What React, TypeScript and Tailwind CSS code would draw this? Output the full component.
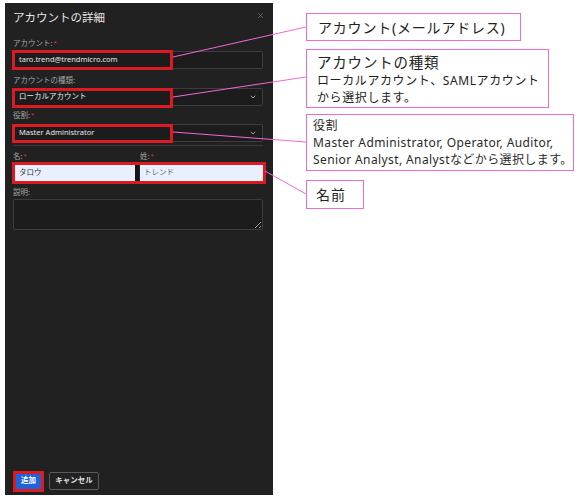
import { ChevronDown, X } from "lucide-react";

const font = "font-['Noto_Sans','Noto_Sans_CJK_JP',sans-serif]";

function Label({ text, required }: { text: string; required?: boolean }) {
  return (
    <div className="flex h-[10px] items-center text-[7.5px] leading-none text-[#a3a3a3]">
      {text}
      {required && <span className="ml-[1px] -mt-[3px] text-[6px] text-[#e0353b]">*</span>}
    </div>
  );
}

function Field({
  children,
  select,
  className = "",
}: {
  children: React.ReactNode;
  select?: boolean;
  className?: string;
}) {
  return (
    <div
      className={`flex h-[18px] items-center justify-between rounded-[2px] border border-[#3d3d3d] bg-[#1c1c1c] px-[5px] text-[7.5px] text-[#e8e8e8] ${className}`}
    >
      <span>{children}</span>
      {select && <ChevronDown size={8} strokeWidth={2.5} className="text-[#bdbdbd]" />}
    </div>
  );
}

function RedBox({ className }: { className: string }) {
  return <div className={`pointer-events-none absolute border-[3px] border-[#dc1a22] ${className}`} />;
}

export default function App() {
  return (
    <div className={`relative h-[499px] w-[579px] bg-white ${font}`}>
      <div className="flex">
        {/* Dialog panel */}
        <div className="ml-[5px] mt-[3px] flex h-[492px] w-[268px] flex-col bg-[#212121] pl-[8px] pr-[10px] pb-[4px]">
          <div className="flex h-[28px] items-center justify-between pt-[2px]">
            <span className="text-[11.5px] text-[#e6e6e6]">アカウントの詳細</span>
            <X size={9} strokeWidth={1.5} className="mr-[-2px] -mt-[6px] text-[#8a8a8a]" />
          </div>

          <div className="mt-[8px]">
            <Label text="アカウント:" required />
          </div>
          <div className="relative mt-[2px]">
            <Field>taro.trend@trendmicro.com</Field>
            <RedBox className="-left-[1px] -top-[1px] h-[20px] w-[161px]" />
          </div>

          <div className="mt-[7px]">
            <Label text="アカウントの種類:" />
          </div>
          <div className="relative mt-[2px]">
            <Field select>ローカルアカウント</Field>
            <RedBox className="-left-[1px] top-0 h-[20px] w-[161px]" />
          </div>

          <div className="mt-[5px]">
            <Label text="役割:" required />
          </div>
          <div className="relative mt-[3px]">
            <Field select>Master Administrator</Field>
            <RedBox className="-left-[1px] top-0 h-[19px] w-[161px]" />
          </div>
          <div className="mt-[3px] h-px bg-[#3a3a3a]" />

          <div className="mt-[6px] flex">
            <div className="w-[127px]">
              <Label text="名:" required />
            </div>
            <Label text="姓:" required />
          </div>
          <div className="relative mt-[2px] flex gap-[4px]">
            <div className="ml-[2px] flex h-[18px] w-[121px] items-center bg-[#e8f0fe] px-[4px] text-[7.5px] text-[#333]">
              タロウ
            </div>
            <div className="flex h-[18px] flex-1 items-center bg-[#e8f0fe] px-[4px] text-[7.5px] text-[#666]">
              トレンド
            </div>
            <RedBox className="-left-[1px] -top-[2px] h-[22px] w-[254px]" />
            <div className="absolute left-[122px] top-[1px] h-[16px] w-[4px] bg-[#151515]" />
          </div>

          <div className="mt-[6px]">
            <Label text="説明:" />
          </div>
          <textarea
            readOnly
            className="mt-[1px] h-[31px] w-full resize-y rounded-[2px] border border-[#3d3d3d] bg-[#1c1c1c] outline-none"
          />

          <div className="mt-auto mb-[1px] flex items-center gap-[7px] pl-[2px]">
            <div className="relative">
              <div className="flex h-[17px] w-[27px] items-center justify-center rounded-[1px] bg-[#1f63d9] text-[7.5px] font-semibold text-white">
                追加
              </div>
              <RedBox className="-left-[2px] -top-[2px] h-[21px] w-[31px]" />
            </div>
            <div className="flex h-[18px] w-[50px] items-center justify-center rounded-[2px] border border-[#5a5a5a] text-[7.5px] font-semibold text-[#e0e0e0]">
              キャンセル
            </div>
          </div>
        </div>

        {/* Annotations */}
        <div className="ml-[33px] mt-[13px] flex flex-col items-start whitespace-nowrap text-[#222]">
          <div className="flex h-[28px] w-[215px] items-center border-[1.5px] border-[#f06ad2] px-[11px] text-[14px] tracking-[0.8px]">
            アカウント(メールアドレス)
          </div>
          <div className="mt-[8px] flex h-[59px] w-[243px] flex-col justify-center border-[1.5px] border-[#f06ad2] px-[10px]">
            <span className="block text-[14.5px] leading-[20px] tracking-[0.8px]">アカウントの種類</span>
            <span className="block text-[12px] leading-[17px] tracking-[0.6px]">ローカルアカウント、SAMLアカウント</span>
            <span className="block text-[12px] leading-[17px] tracking-[0.6px]">から選択します。</span>
          </div>
          <div className="mt-[6px] flex h-[57px] w-[268px] flex-col justify-center border-[1.5px] border-[#f06ad2] px-[6px] text-[12px] leading-[17px] tracking-[0.4px] text-[#2a2a2a]">
            <span>役割</span>
            <span>Master Administrator, Operator, Auditor,</span>
            <span>Senior Analyst, Analystなどから選択します。</span>
          </div>
          <div className="mt-[9px] flex h-[29px] w-[58px] items-center border-[1.5px] border-[#f06ad2] px-[9px] text-[14px] tracking-[1px]">
            名前
          </div>
        </div>
      </div>

      {/* Leader lines */}
      <svg className="pointer-events-none absolute left-0 top-0" width="579" height="499">
        <g stroke="#f06ad2" strokeWidth="1">
          <line x1="173" y1="57" x2="306" y2="27" />
          <line x1="173" y1="97" x2="306" y2="77" />
          <line x1="173" y1="132" x2="306" y2="142" />
          <line x1="265" y1="171" x2="306" y2="194" />
        </g>
      </svg>
    </div>
  );
}
